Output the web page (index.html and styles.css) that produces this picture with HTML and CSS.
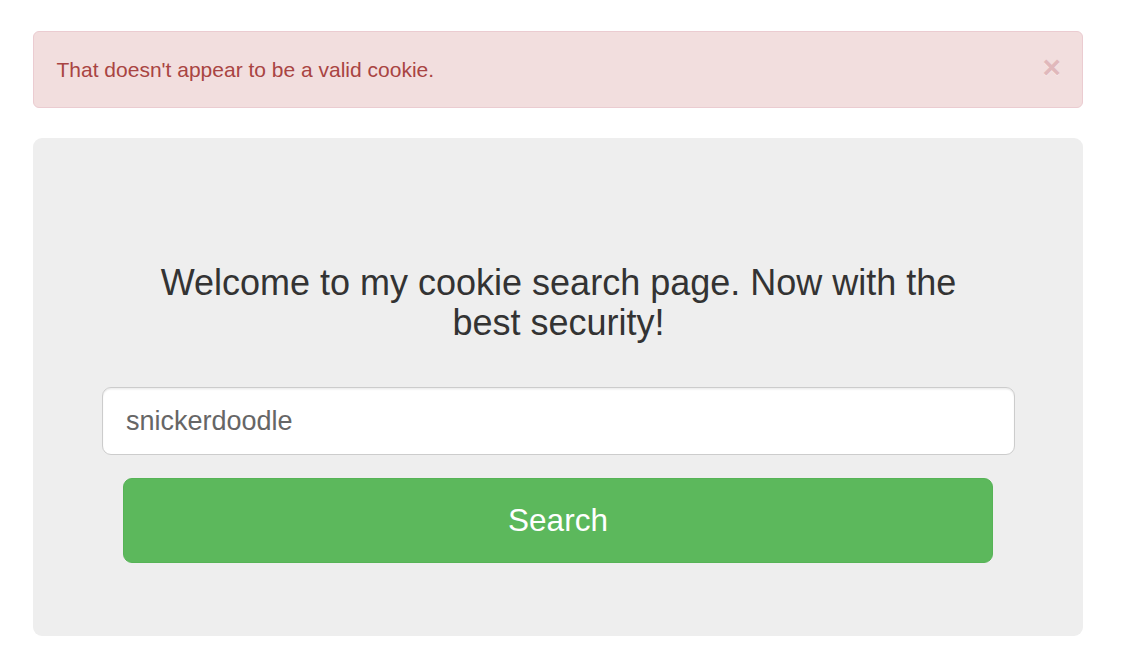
FILE: index.html
```html
<!DOCTYPE html>
<html lang="en">
<head>
<meta charset="utf-8">
<title>Cookie Search</title>
<link rel="stylesheet" href="styles.css">
</head>
<body>
<div class="page">
  <div class="alert">
    <span class="alert-msg">That doesn't appear to be a valid cookie.</span>
    <span class="close">&times;</span>
  </div>
  <div class="jumbotron">
    <h3 class="title">Welcome to my cookie search page. Now with the best security!</h3>
    <form class="search-form">
      <input class="search-input" type="text" value="snickerdoodle">
      <button class="search-btn" type="button">Search</button>
    </form>
  </div>
</div>
</body>
</html>
```
FILE: styles.css
```css
html, body {
  margin: 0;
  padding: 0;
  background: #fff;
}
body {
  font-family: "Liberation Sans", Arial, Helvetica, sans-serif;
  color: #333;
}
.page {
  width: 1050px;
  padding: 31px 0 0 33px;
}
.alert {
  box-sizing: border-box;
  display: flex;
  align-items: flex-start;
  height: 77px;
  padding: 22.5px 21px 22.5px 22.5px;
  margin-bottom: 30px;
  background: #f2dede;
  border: 1px solid #ebccd1;
  border-radius: 6px;
  color: #a94442;
  font-size: 21px;
  line-height: 30px;
}
.alert-msg {
  flex: 1;
}
.close {
  font-size: 31.5px;
  font-weight: bold;
  line-height: 1;
  margin-top: -3px;
  color: #e0b8bb;
  text-shadow: 0 1px 0 #f8e8e8;
}
.jumbotron {
  box-sizing: border-box;
  height: 498px;
  padding: 125px 68px 0 69px;
  background: #eee;
  border-radius: 9px;
}
.title {
  margin: 0 auto;
  max-width: 840px;
  text-align: center;
  font-size: 36px;
  font-weight: 500;
  line-height: 39.6px;
  color: #333;
}
.search-form {
  display: flex;
  flex-direction: column;
  margin-top: 45px;
}
.search-input {
  box-sizing: border-box;
  width: 100%;
  height: 68px;
  padding: 0 23px;
  font-family: "Liberation Sans", Arial, sans-serif;
  font-size: 27px;
  color: #666;
  background: #fff;
  border: 1px solid #ccc;
  border-radius: 9px;
  box-shadow: inset 0 1.5px 1.5px rgba(0,0,0,.075);
  outline: none;
}
.search-btn {
  box-sizing: border-box;
  height: 85px;
  margin: 23px 22px 0 21px;
  font-family: "Liberation Sans", Arial, sans-serif;
  font-size: 31.5px;
  color: #fff;
  background: #5cb85c;
  border: 1px solid #56b356;
  border-radius: 9px;
  cursor: pointer;
}
```
